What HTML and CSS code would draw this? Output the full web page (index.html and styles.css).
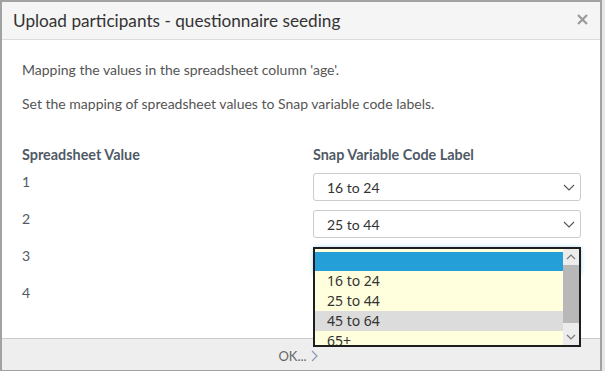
FILE: index.html
```html
<!DOCTYPE html>
<html lang="en">
<head>
    <meta charset="UTF-8">
    <title>Upload participants - questionnaire seeding</title>
    <link rel="stylesheet" href="styles.css">
</head>
<body>
    <div class="dialog">
        <div class="dialog-header">
            <h1 class="dialog-title">Upload participants - questionnaire seeding</h1>
            <svg class="close-icon" width="11" height="11" viewBox="0 0 11 11">
                <path d="M1 1 L10 10 M10 1 L1 10" stroke="#9a9a9a" stroke-width="2.2" fill="none"/>
            </svg>
        </div>

        <div class="dialog-body">
            <p class="intro">Mapping the values in the spreadsheet column 'age'.</p>
            <p class="intro">Set the mapping of spreadsheet values to Snap variable code labels.</p>

            <div class="mapping">
                <div class="col-head">Spreadsheet Value</div>
                <div class="col-head">Snap Variable Code Label</div>

                <div class="value">1</div>
                <div class="select">16 to 24<svg class="chevron" width="12" height="7" viewBox="0 0 12 7"><path d="M1 1 L6 6 L11 1" stroke="#555" stroke-width="1.1" fill="none"/></svg></div>

                <div class="value">2</div>
                <div class="select">25 to 44<svg class="chevron" width="12" height="7" viewBox="0 0 12 7"><path d="M1 1 L6 6 L11 1" stroke="#555" stroke-width="1.1" fill="none"/></svg></div>

                <div class="value">3</div>
                <div class="select open">
                    <div class="listbox">
                        <div class="options">
                            <div class="option selected"></div>
                            <div class="option">16 to 24</div>
                            <div class="option">25 to 44</div>
                            <div class="option hover">45 to 64</div>
                            <div class="option">65+</div>
                        </div>
                        <div class="scrollbar">
                            <div class="scroll-btn">
                                <svg width="10" height="6" viewBox="0 0 10 6"><path d="M1 5 L5 1 L9 5" stroke="#777" stroke-width="1.2" fill="none"/></svg>
                            </div>
                            <div class="scroll-thumb"></div>
                            <div class="scroll-btn down">
                                <svg width="10" height="6" viewBox="0 0 10 6"><path d="M1 1 L5 5 L9 1" stroke="#777" stroke-width="1.2" fill="none"/></svg>
                            </div>
                        </div>
                    </div>
                </div>

                <div class="value">4</div>
                <div></div>
            </div>
        </div>

        <div class="dialog-footer">
            <span class="ok-button">OK...<svg width="7" height="12" viewBox="0 0 7 12"><path d="M1 1 L6 6 L1 11" stroke="#8a9ab0" stroke-width="1.2" fill="none"/></svg></span>
        </div>
    </div>
</body>
</html>
```

FILE: styles.css
```css
:root {
    --text: #555;
    --title: #333;
    --label: #4f5a66;
    --border: #ccc;
    --list-bg: #ffffdd;
    --list-blue: #259fd8;
}

html, body {
    margin: 0;
    padding: 0;
}

body {
    font-family: Lato, "Open Sans", sans-serif;
    background-color: #e6e6e6;
    color: var(--text);
    width: 605px;
    height: 371px;
    overflow: hidden;
}

.dialog {
    box-sizing: border-box;
    width: 602px;
    height: 371px;
    border: 2px solid #a2a2a2;
    border-bottom-width: 1px;
    background-color: white;
    display: flex;
    flex-direction: column;
}

.dialog-header {
    height: 37px;
    flex: none;
    display: flex;
    align-items: center;
    justify-content: space-between;
    padding: 0 11px;
    background-color: #f5f5f5;
    border-bottom: 1px solid #ddd;
}

.dialog-title {
    margin: 0;
    font-size: 17.2px;
    font-weight: 400;
    color: var(--title);
}

.close-icon {
    margin-right: 1px;
    margin-top: -3px;
}

.dialog-body {
    flex: 1;
    padding: 22px 19px 0 20px;
}

.intro {
    margin: 0 0 18px;
    font-size: 14px;
    line-height: 16px;
}

.mapping {
    display: grid;
    grid-template-columns: 291px 268px;
    grid-template-rows: 26px;
    grid-auto-rows: 37px;
    margin-top: 35px;
}

.col-head {
    font-size: 14.4px;
    font-weight: 700;
    line-height: 16px;
    color: var(--label);
}

.value {
    font-size: 14px;
    line-height: 16px;
    padding-top: 1px;
    color: var(--label);
}

.select {
    box-sizing: border-box;
    height: 28px;
    border: 1px solid var(--border);
    border-radius: 3px;
    display: flex;
    align-items: center;
    justify-content: space-between;
    padding: 0 5px 0 13px;
    font-size: 14px;
    color: #333;
}

.chevron {
    margin-top: 1px;
}

.select.open {
    position: relative;
    border-color: #8cc8ea;
    box-shadow: 0 0 4px rgba(37, 159, 216, 0.4);
}

.listbox {
    position: absolute;
    left: -1px;
    top: -1px;
    width: 268px;
    height: 100px;
    box-sizing: border-box;
    border: 2px solid #1e1e1e;
    background-color: var(--list-bg);
    display: flex;
    overflow: hidden;
    font-family: "Noto Sans", sans-serif;
    font-size: 14px;
    color: #333;
}

.options {
    flex: 1;
    padding-top: 3px;
}

.option {
    height: 20px;
    line-height: 20px;
    padding-left: 12px;
}

.option.selected {
    height: 19px;
    background-color: var(--list-blue);
}

.option.hover {
    background-color: #dcdcdc;
}

.scrollbar {
    width: 16px;
    display: flex;
    flex-direction: column;
    background-color: #ececec;
}

.scroll-btn {
    height: 16px;
    display: flex;
    align-items: center;
    justify-content: center;
}

.scroll-btn.down {
    height: 22px;
    align-items: flex-end;
    padding-bottom: 5px;
    box-sizing: border-box;
}

.scroll-thumb {
    height: 58px;
    background-color: #b8b8b8;
}

.dialog-footer {
    height: 31px;
    flex: none;
    border-top: 1px solid #c8ccd0;
    background-color: #eee;
    display: flex;
    align-items: center;
    justify-content: center;
}

.ok-button {
    font-size: 13px;
    color: #666;
    display: flex;
    align-items: center;
    gap: 4px;
    margin-left: -6px;
    margin-top: 2px;
}
```
